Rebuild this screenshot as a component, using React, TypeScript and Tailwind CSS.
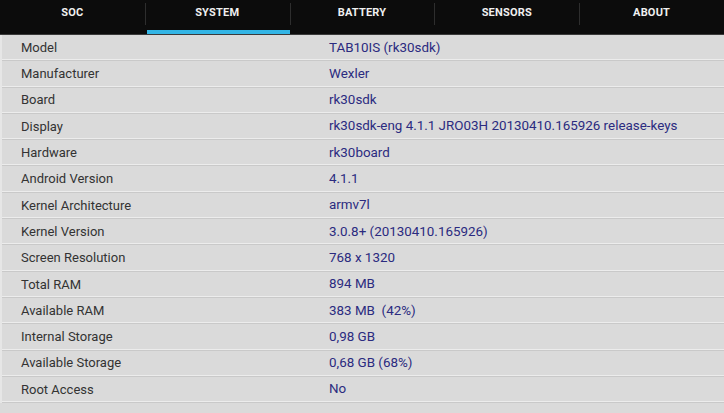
const tabs = ['SOC', 'SYSTEM', 'BATTERY', 'SENSORS', 'ABOUT'];

const rows: [string, string][] = [
  ['Model', 'TAB10IS (rk30sdk)'],
  ['Manufacturer', 'Wexler'],
  ['Board', 'rk30sdk'],
  ['Display', 'rk30sdk-eng 4.1.1 JRO03H 20130410.165926 release-keys'],
  ['Hardware', 'rk30board'],
  ['Android Version', '4.1.1'],
  ['Kernel Architecture', 'armv7l'],
  ['Kernel Version', '3.0.8+ (20130410.165926)'],
  ['Screen Resolution', '768 x 1320'],
  ['Total RAM', '894 MB'],
  ['Available RAM', '383 MB  (42%)'],
  ['Internal Storage', '0,98 GB'],
  ['Available Storage', '0,68 GB (68%)'],
  ['Root Access', 'No'],
];

export default function App() {
  return (
    <div className="w-[724px] h-[413px] overflow-hidden bg-[#dadada] font-['Roboto','Liberation_Sans',sans-serif]">
      <div className="h-[35px] bg-[#0c0c0c] border-b border-[#3a3a3a] grid grid-cols-5">
        {tabs.map((t, i) => (
          <div key={t} className="relative flex justify-center">
            {i > 0 && <div className="absolute left-0 top-[3px] h-[22px] w-px bg-[#2e2e2e]" />}
            <span className="mt-[6px] text-[11px] leading-[14px] font-bold text-[#f0f0f0] tracking-[0.2px]">{t}</span>
            {t === 'SYSTEM' && <div className="absolute left-[2px] right-0 bottom-0 h-[4px] bg-[#33b5e5]" />}
          </div>
        ))}
      </div>
      <div className="border-l-2 border-[#e6e6e6]">
        {rows.map(([k, v]) => (
          <div key={k} className="h-[26.3px] flex items-center border-b border-[#c9c9c9] shadow-[inset_0_-1px_0_#ececec] text-[13px]">
            <span className="w-[327px] pl-[19px] text-[#333333]">{k}</span>
            <span className="text-[13.4px] text-[#2b2b80] whitespace-pre">{v}</span>
          </div>
        ))}
      </div>
    </div>
  );
}
